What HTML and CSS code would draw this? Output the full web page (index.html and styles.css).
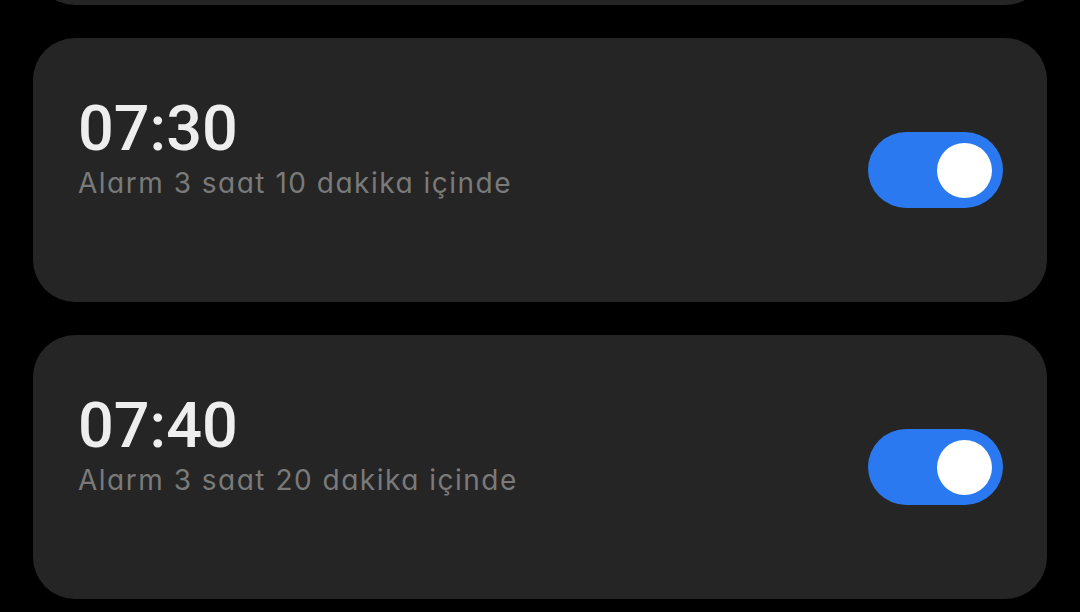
FILE: index.html
```html
<!DOCTYPE html>
<html>
<head>
  <meta charset="UTF-8">
  <title>Alarmlar</title>
  <link rel="stylesheet" href="styles.css">
</head>
<body>
  <div class="alarm-list">
    <!-- previous card, scrolled mostly out of view -->
    <div class="alarm-card"></div>

    <div class="alarm-card">
      <div class="alarm-info">
        <div class="alarm-time">07:30</div>
        <div class="alarm-note">Alarm 3 saat 10 dakika içinde</div>
      </div>
      <div class="switch on"><span class="knob"></span></div>
    </div>

    <div class="alarm-card">
      <div class="alarm-info">
        <div class="alarm-time">07:40</div>
        <div class="alarm-note">Alarm 3 saat 20 dakika içinde</div>
      </div>
      <div class="switch on"><span class="knob"></span></div>
    </div>
  </div>
</body>
</html>
```

FILE: styles.css
```css
* {
  box-sizing: border-box;
}
html, body {
  margin: 0;
  height: 100%;
  overflow: hidden;
}
body {
  font-family: Inter, Roboto, "Noto Sans", sans-serif;
  font-feature-settings: "cv11";
  background-color: #000;
}
.alarm-list {
  display: flex;
  flex-direction: column;
  gap: 33px;
  padding: 0 33px;
  margin-top: -259px;
}
.alarm-card {
  height: 264px;
  border-radius: 42px;
  background-color: rgb(37, 37, 37);
  padding: 59px 44px 0 45px;
  display: flex;
  justify-content: space-between;
  align-items: flex-start;
}
.alarm-time {
  font-family: Roboto, "Noto Sans", sans-serif;
  font-size: 63px;
  line-height: 1;
  font-weight: 500;
  color: rgb(238, 238, 238);
}
.alarm-note {
  margin-top: 9px;
  font-size: 28px;
  line-height: 1;
  letter-spacing: 1.5px;
  color: rgb(122, 122, 122);
}
.switch {
  align-self: center;
  margin-top: -59px;
  width: 135px;
  height: 76px;
  border-radius: 38px;
  background-color: rgb(42, 121, 240);
  display: flex;
  align-items: center;
  justify-content: flex-end;
  padding-right: 11px;
}
.knob {
  width: 55px;
  height: 55px;
  border-radius: 50%;
  background-color: #fff;
}
```
